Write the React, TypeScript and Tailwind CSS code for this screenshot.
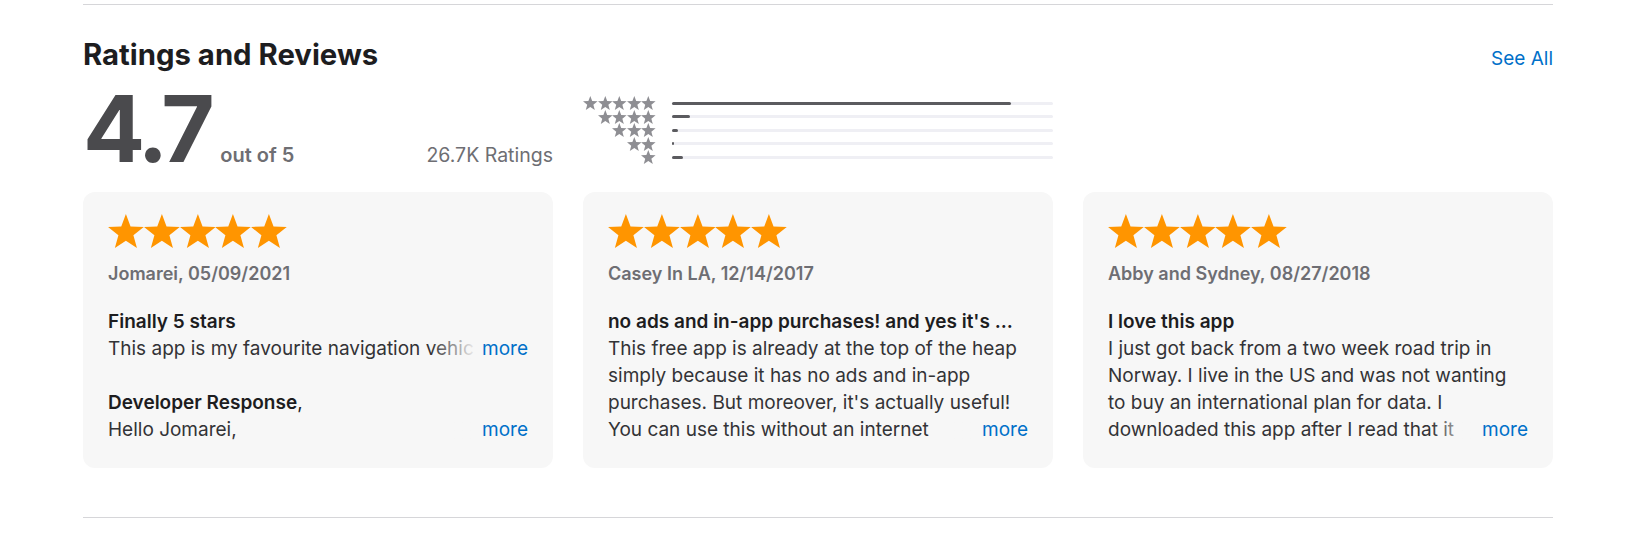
import React from 'react';

type Review = {
  author: string;
  date: string;
  title: string;
  lines: string[];
  response?: string[];
};

const reviews: Review[] = [
  {
    author: 'Jomarei',
    date: '05/09/2021',
    title: 'Finally 5 stars',
    lines: ['This app is my favourite navigation vehic'],
    response: ['Hello Jomarei,'],
  },
  {
    author: 'Casey In LA',
    date: '12/14/2017',
    title: "no ads and in-app purchases! and yes it's ...",
    lines: [
      'This free app is already at the top of the heap',
      'simply because it has no ads and in-app',
      "purchases. But moreover, it's actually useful!",
      'You can use this without an internet',
    ],
  },
  {
    author: 'Abby and Sydney',
    date: '08/27/2018',
    title: 'I love this app',
    lines: [
      'I just got back from a two week road trip in',
      'Norway. I live in the US and was not wanting',
      'to buy an international plan for data. I',
      'downloaded this app after I read that it',
    ],
  },
];

// share of ratings per star count, 5 down to 1
const histogram = [89, 4.7, 1.6, 0.5, 2.9];

const Star = ({ className }: { className?: string }) => (
  <svg viewBox="0 0 100 95.2" className={className} fill="currentColor">
    <polygon points="50,0 63,34.7 100,36.4 71,59.4 80.9,95.2 50,74.7 19.1,95.2 29,59.4 0,36.4 37,34.7" />
  </svg>
);

const Clamped = ({ lines }: { lines: string[] }) => {
  const last = lines[lines.length - 1];
  return (
    <div className="text-[19px] leading-[27px] whitespace-nowrap text-[#333336]">
      {lines.slice(0, -1).map((line, i) => (
        <div key={i}>{line}</div>
      ))}
      <div className="flex justify-between">
        <span>{last}</span>
        <a className="relative bg-[#f7f7f7] pl-[5px] text-[#0070c9]">
          <span className="absolute inset-y-0 right-full w-[46px] bg-linear-to-r from-[#f7f7f700] to-[#f7f7f7]" />
          more
        </a>
      </div>
    </div>
  );
};

const ReviewCard = ({ review }: { review: Review }) => (
  <div className="h-[276px] rounded-[12px] bg-[#f7f7f7] px-[25px] pt-[22px]">
    <div className="flex text-[#ff9500]">
      {[0, 1, 2, 3, 4].map((i) => (
        <Star key={i} className="h-[34px] w-[35.8px]" />
      ))}
    </div>
    <div className="mt-[14px] text-[18px] leading-[24px] font-semibold text-[#6e6e73]">
      {review.author}, {review.date}
    </div>
    <h3 className="mt-[22px] overflow-hidden text-[19px] leading-[27px] font-semibold whitespace-nowrap text-[#1d1d1f]">
      {review.title}
    </h3>
    <Clamped lines={review.lines} />
    {review.response && (
      <>
        <div className="mt-[27px] text-[19px] leading-[27px] text-[#1d1d1f]">
          <span className="font-semibold">Developer Response</span>,
        </div>
        <Clamped lines={review.response} />
      </>
    )}
  </div>
);

export default function App() {
  return (
    <div className="min-h-screen bg-white font-['Inter',sans-serif] text-[#1d1d1f]">
      <section className="mx-auto w-[1470px] pt-[4px]">
        <div className="border-t border-[#d6d6d9]" />

        <div className="mt-[32px] flex items-baseline justify-between">
          <h2 className="text-[29.3px] leading-[36px] font-bold">Ratings and Reviews</h2>
          <a className="text-[19px] text-[#0070c9]">See All</a>
        </div>

        <div className="mt-[9px] grid grid-cols-3 gap-x-[30px]">
          <div className="flex items-baseline justify-between">
            <div className="flex items-baseline">
              <span className="text-[92px] leading-[92px] font-bold tracking-[-0.05em] text-[#4a4a4d]">4.7</span>
              <span className="ml-[10px] text-[20px] font-semibold text-[#6e6e73]">out of 5</span>
            </div>
            <span className="text-[19.5px] text-[#6e6e73]">26.7K Ratings</span>
          </div>

          <div className="mt-[14px] flex flex-col self-start">
            {histogram.map((pct, row) => (
              <div key={row} className="flex h-[13.5px] items-center">
                <div className="flex w-[73px] justify-end text-[#8e8e93]">
                  {Array.from({ length: 5 - row }).map((_, i) => (
                    <Star key={i} className="h-[13.9px] w-[14.6px]" />
                  ))}
                </div>
                <div className="ml-[16px] h-[3px] flex-1 rounded-full bg-[#efeff4]">
                  <div className="h-full rounded-full bg-[#5b5b5f]" style={{ width: `${pct}%` }} />
                </div>
              </div>
            ))}
          </div>
        </div>

        <div className="mt-[17px] grid grid-cols-3 gap-[30px]">
          {reviews.map((r) => (
            <ReviewCard key={r.author} review={r} />
          ))}
        </div>

        <div className="mt-[49px] border-t border-[#d6d6d9]" />
      </section>
    </div>
  );
}
